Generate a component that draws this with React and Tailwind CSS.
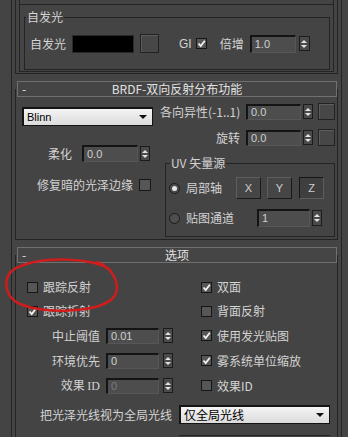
const LINE = "border-[#242424]";

function Field({ className = "", value, dim }) {
  return (
    <div
      className={`flex items-center border border-t-2 border-l-2 border-t-[#141414] border-l-[#141414] border-b-[#575757] border-r-[#575757] bg-[#4d4d4d] pl-[3px] font-['Liberation_Sans',sans-serif] text-[11px] ${
        dim ? "text-[#7c7c7c]" : "text-[#cfcfcf]"
      } ${className}`}
    >
      {value}
    </div>
  );
}

function Arrows({ className = "" }) {
  return (
    <div
      className={`flex w-[10px] flex-col items-center justify-center gap-[2px] border border-[#1c1c1c] bg-[#4a4a4a] ${className}`}
    >
      <svg width="6" height="3" viewBox="0 0 6 3">
        <path d="M0 3 L3 0 L6 3Z" fill="#e4e4e4" />
      </svg>
      <svg width="6" height="3" viewBox="0 0 6 3">
        <path d="M0 0 L3 3 L6 0Z" fill="#e4e4e4" />
      </svg>
    </div>
  );
}

function Check({ checked, className = "" }) {
  return (
    <div
      className={`flex h-[11px] w-[11px] items-center justify-center border border-[#161616] bg-[#565656] ${className}`}
    >
      {checked && (
        <svg width="9" height="9" viewBox="0 0 9 9">
          <path d="M1.5 4.5 L3.7 7 L7.8 1.8" fill="none" stroke="#f2f2f2" strokeWidth="1.8" />
        </svg>
      )}
    </div>
  );
}

function MapBtn({ className = "" }) {
  return (
    <div
      className={`h-[17px] w-[17px] border border-[#222] bg-[#474747] shadow-[inset_1px_1px_0_#5c5c5c] ${className}`}
    />
  );
}

function Drop({ className = "", children }) {
  return (
    <div
      className={`flex items-center justify-between border border-t-2 border-l-2 border-[#141414] bg-gradient-to-b from-[#f4f4f4] to-[#dcdcdc] pl-[3px] pr-[5px] text-black ${className}`}
    >
      <span>{children}</span>
      <svg width="8" height="4" viewBox="0 0 8 4">
        <path d="M0 0 L8 0 L4 4Z" fill="#111" />
      </svg>
    </div>
  );
}

function Header({ title }) {
  return (
    <div className="-mt-[8px] ml-[1px] flex h-[16px] items-center border border-[#707070] bg-[#454545] text-[#e2e2e2]">
      <span className="w-[12px] pl-[4px]">-</span>
      <span className="flex-1 pr-[12px] text-center">{title}</span>
    </div>
  );
}

function XYZ({ label, pressed }) {
  return (
    <div
      className={`flex h-[22px] w-[25px] items-center justify-center border font-['Liberation_Sans',sans-serif] text-[11px] text-[#cfcfcf] ${
        pressed
          ? "border-t-[#161616] border-l-[#161616] border-b-[#5e5e5e] border-r-[#5e5e5e] bg-[#3f3f3f]"
          : "border-t-[#5e5e5e] border-l-[#5e5e5e] border-b-[#1a1a1a] border-r-[#1a1a1a] bg-[#464646]"
      }`}
    >
      {label}
    </div>
  );
}

function Radio({ on }) {
  return (
    <div className="flex h-[11px] w-[11px] items-center justify-center rounded-full border border-[#1a1a1a] bg-[#4e4e4e]">
      {on && <div className="h-[5px] w-[5px] rounded-full bg-[#e8e8e8]" />}
    </div>
  );
}

export default function App() {
  return (
    <div className="relative h-[437px] w-[348px] overflow-hidden bg-[#444444] font-['Noto_Sans_CJK_SC',sans-serif] text-[12px] leading-none text-[#d3d3d3]">
      <div className={`ml-[11px] flex h-full w-[331px] flex-col border-x ${LINE} px-[3px]`}>
        {/* Self-illumination */}
        <div className={`h-[74px] shrink-0 border-x border-b ${LINE} px-[3px]`}>
          <div className={`flex h-[72px] flex-col border-x border-b ${LINE}`}>
            <div className={`h-[5px] border-b ${LINE}`} />
            <fieldset className={`ml-[4px] mr-[3px] mt-[5px] h-[60px] border ${LINE}`}>
              <legend className="ml-[1px] px-[1px] leading-[14px]">自发光</legend>
              <div className="mt-[10px] flex h-[19px] items-center">
                <span className="ml-[5px]">自发光</span>
                <div className="ml-[6px] h-[18px] w-[62px] border border-[#2a2a2a] bg-black" />
                <MapBtn className="ml-[6px] h-[19px] w-[19px]" />
                <span className="ml-[20px] font-['Liberation_Sans',sans-serif] text-[12px]">GI</span>
                <Check checked className="ml-[4px]" />
                <span className="ml-[13px]">倍增</span>
                <Field value="1.0" className="ml-[6px] h-[18px] w-[46px]" />
                <Arrows className="ml-[3px] h-[15px] w-[11px]" />
              </div>
            </fieldset>
          </div>
        </div>

        {/* BRDF */}
        <div className={`mt-[15px] h-[151px] shrink-0 border-x border-b ${LINE}`}>
          <Header title="BRDF-双向反射分布功能" />
          <div className="flex">
            <div className="flex w-[144px] flex-col">
              <Drop className="ml-[6px] mt-[10px] h-[19px] w-[131px] font-['Liberation_Sans',sans-serif] text-[11px]">
                Blinn
              </Drop>
              <div className="mt-[19px] flex h-[17px] items-center">
                <span className="w-[56px] text-right">柔化</span>
                <Field value="0.0" className="ml-[10px] h-[17px] w-[56px]" />
                <Arrows className="ml-[2px] h-[15px] w-[9px]" />
              </div>
              <div className="mt-[16px] flex h-[13px] items-center">
                <span className="w-[117px] text-right">修复暗的光泽边缘</span>
                <Check className="ml-[6px] h-[12px] w-[12px]" />
              </div>
            </div>
            <div className="flex flex-1 flex-col">
              <div className="mt-[6px] flex h-[17px] items-center">
                <span className="w-[80px] whitespace-nowrap text-right">各向异性(-1..1)</span>
                <Field value="0.0" className="ml-[6px] h-[16px] w-[55px]" />
                <Arrows className="ml-[2px] h-[15px]" />
                <MapBtn className="ml-[5px]" />
              </div>
              <div className="mt-[9px] flex h-[17px] items-center">
                <span className="w-[80px] text-right">旋转</span>
                <Field value="0.0" className="ml-[6px] h-[16px] w-[55px]" />
                <Arrows className="ml-[2px] h-[15px]" />
                <MapBtn className="ml-[5px]" />
              </div>
              <fieldset className={`ml-[5px] mt-[10px] h-[81px] w-[170px] border ${LINE}`}>
                <legend className="ml-[4px] px-[1px] leading-[14px]">UV 矢量源</legend>
                <div className="mt-[7px] flex h-[22px] items-center">
                  <div className="ml-[3px]">
                    <Radio on />
                  </div>
                  <span className="ml-[6px]">局部轴</span>
                  <div className="ml-[14px]">
                    <XYZ label="X" />
                  </div>
                  <div className="ml-[6px]">
                    <XYZ label="Y" />
                  </div>
                  <div className="ml-[7px]">
                    <XYZ label="Z" pressed />
                  </div>
                </div>
                <div className="mt-[10px] flex h-[18px] items-center">
                  <div className="ml-[3px]">
                    <Radio />
                  </div>
                  <span className="ml-[6px]">贴图通道</span>
                  <Field value="1" className="ml-[23px] h-[18px] w-[53px]" />
                  <Arrows className="ml-[2px] h-[16px]" />
                </div>
              </fieldset>
            </div>
          </div>
        </div>

        {/* Options */}
        <div className={`mt-[15px] h-[200px] shrink-0 border-x border-b ${LINE}`}>
          <Header title="选项" />
          <div className="mt-[12px] flex flex-col">
            <div className="flex h-[24px] items-center">
              <div className="flex w-[184px] items-center">
                <Check className="ml-[11px]" />
                <span className="ml-[5px]">跟踪反射</span>
              </div>
              <Check checked className="ml-[1px]" />
              <span className="ml-[5px]">双面</span>
            </div>
            <div className="flex h-[24px] items-center">
              <div className="flex w-[184px] items-center">
                <Check checked className="ml-[11px]" />
                <span className="ml-[5px]">跟踪折射</span>
              </div>
              <Check className="ml-[1px]" />
              <span className="ml-[5px]">背面反射</span>
            </div>
            <div className="flex h-[25px] items-center">
              <div className="flex w-[184px] items-center">
                <span className="w-[84px] text-right">中止阈值</span>
                <Field value="0.01" className="ml-[6px] h-[16px] w-[53px]" />
                <Arrows className="ml-[4px] h-[15px]" />
              </div>
              <Check checked className="ml-[1px]" />
              <span className="ml-[5px]">使用发光贴图</span>
            </div>
            <div className="flex h-[25px] items-center">
              <div className="flex w-[184px] items-center">
                <span className="w-[84px] text-right">环境优先</span>
                <Field value="0" className="ml-[6px] h-[16px] w-[53px]" />
                <Arrows className="ml-[4px] h-[15px]" />
              </div>
              <Check checked className="ml-[1px]" />
              <span className="ml-[5px]">雾系统单位缩放</span>
            </div>
            <div className="flex h-[25px] items-center">
              <div className="flex w-[184px] items-center">
                <span className="w-[84px] text-right">
                  效果 <span className="font-['Liberation_Serif',serif]">ID</span>
                </span>
                <Field dim value="0" className="ml-[6px] h-[16px] w-[53px]" />
                <Arrows className="ml-[4px] h-[15px]" />
              </div>
              <Check className="ml-[1px]" />
              <span className="ml-[5px]">效果ID</span>
            </div>
            <div className="mt-[7px] flex h-[19px] items-center">
              <span className="ml-[24px] whitespace-nowrap">把光泽光线视为全局光线</span>
              <Drop className="ml-[7px] h-[19px] w-[151px]">仅全局光线</Drop>
            </div>
            <div className={`ml-[163px] mt-[11px] h-[6px] w-[151px] border-t ${LINE}`} />
          </div>
        </div>
      </div>

      {/* red hand-drawn annotation */}
      <svg
        className="pointer-events-none absolute left-0 top-0"
        width="348"
        height="437"
        viewBox="0 0 348 437"
      >
        <path
          d="M110 270 C 96 258, 42 255, 16 268 C 2 276, 3 296, 20 304 C 44 314, 96 313, 112 299 C 121 290, 118 272, 98 262"
          fill="none"
          stroke="#d21c1c"
          strokeWidth="2.5"
          strokeLinecap="round"
        />
      </svg>
    </div>
  );
}
